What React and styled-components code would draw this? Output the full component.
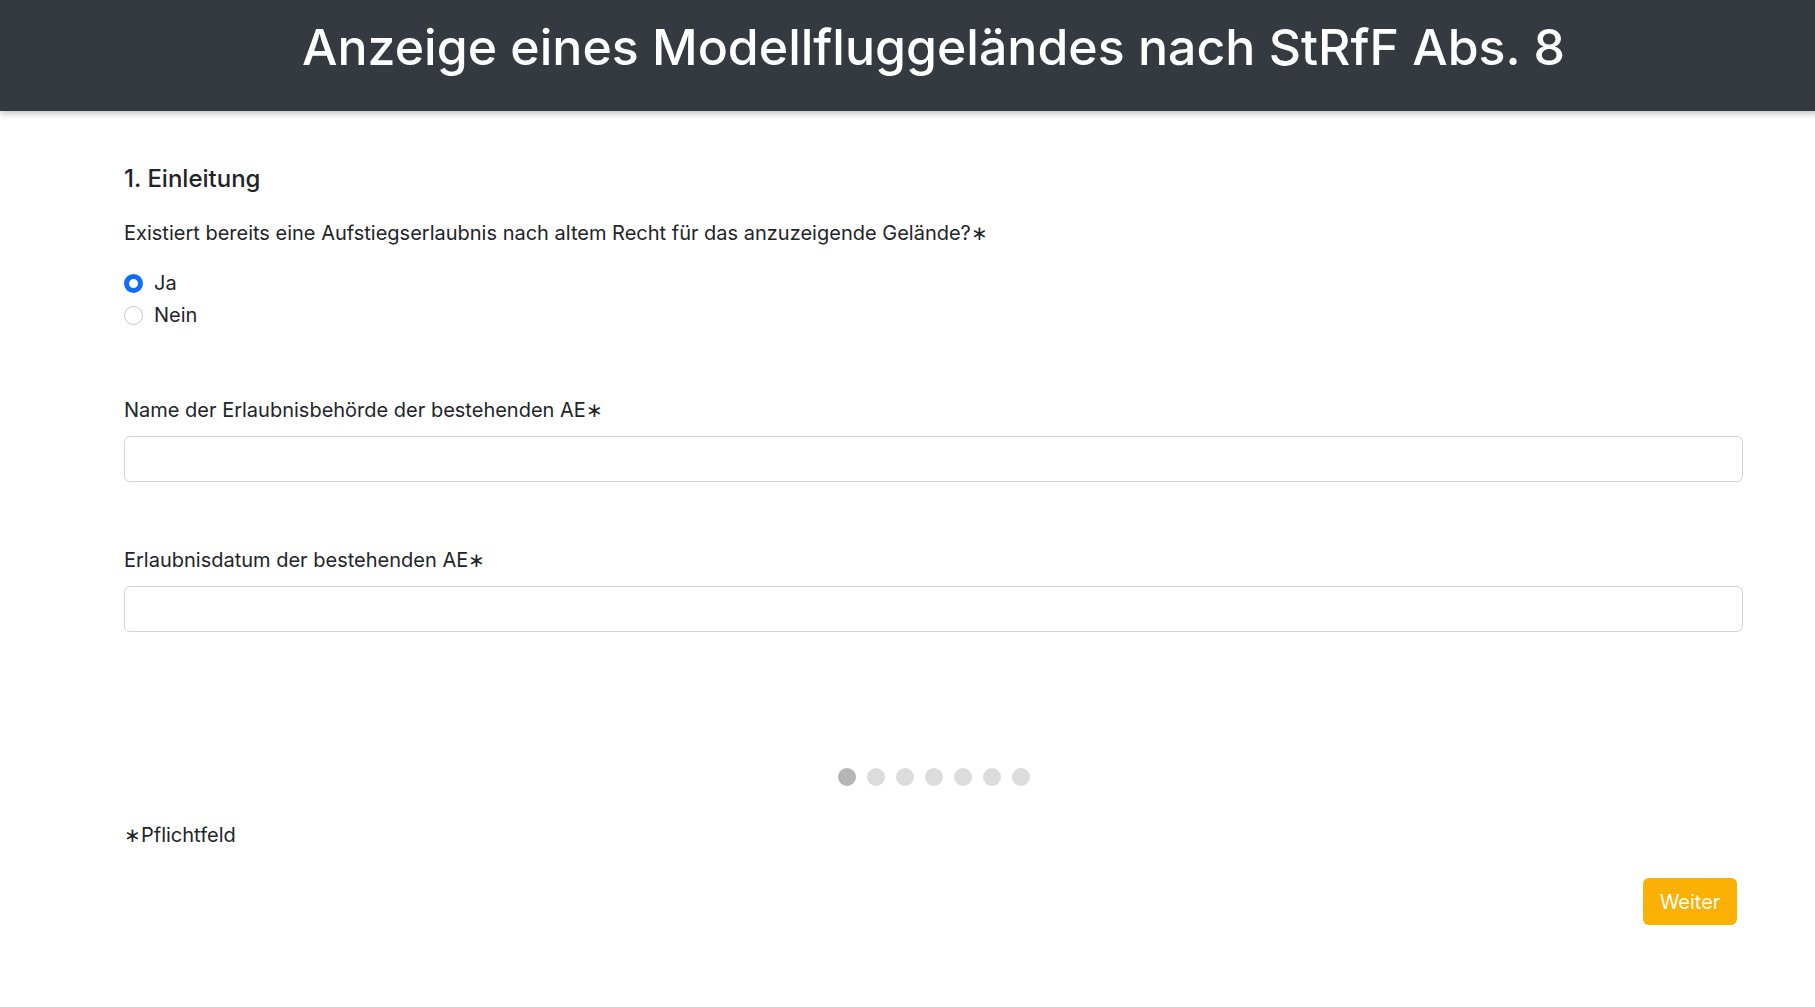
import React, { useState } from 'react';
import styled, { createGlobalStyle } from 'styled-components';

const GlobalStyle = createGlobalStyle`
  html, body {
    margin: 0;
    padding: 0;
    overflow-x: hidden;
    background: #fff;
  }
  body {
    font-family: Inter, "Noto Sans", "Liberation Sans", sans-serif;
    color: #212529;
  }
  * {
    box-sizing: border-box;
  }
`;

const STEPS = 7;

const App = () => {
  const [answer, setAnswer] = useState('ja');

  return (
    <Page>
      <GlobalStyle />
      <Header>
        <Title>Anzeige eines Modellfluggeländes nach StRfF Abs. 8</Title>
      </Header>

      <Main>
        <SectionTitle>1. Einleitung</SectionTitle>
        <Question>
          Existiert bereits eine Aufstiegserlaubnis nach altem Recht für das anzuzeigende Gelände?∗
        </Question>

        <RadioGroup>
          <RadioRow>
            <Radio
              type="radio"
              name="ae"
              checked={answer === 'ja'}
              onChange={() => setAnswer('ja')}
            />
            Ja
          </RadioRow>
          <RadioRow>
            <Radio
              type="radio"
              name="ae"
              checked={answer === 'nein'}
              onChange={() => setAnswer('nein')}
            />
            Nein
          </RadioRow>
        </RadioGroup>

        <Field $top={67}>
          <Label>Name der Erlaubnisbehörde der bestehenden AE∗</Label>
          <Input type="text" />
        </Field>

        <Field $top={66}>
          <Label>Erlaubnisdatum der bestehenden AE∗</Label>
          <Input type="text" />
        </Field>

        <Dots>
          {Array.from({ length: STEPS }).map((_, i) => (
            <Dot key={i} $active={i === 0} />
          ))}
        </Dots>

        <Hint>∗Pflichtfeld</Hint>

        <Actions>
          <NextButton>Weiter</NextButton>
        </Actions>
      </Main>
    </Page>
  );
};

const Page = styled.div`
  width: 1867px;
  min-height: 100vh;
`;

const Header = styled.header`
  background-color: #343a40;
  height: 111px;
  display: flex;
  align-items: center;
  justify-content: center;
  box-shadow: 0 3px 6px rgba(0, 0, 0, 0.22);
`;

const Title = styled.h1`
  margin: 0 0 18px;
  color: #fff;
  font-size: 50px;
  font-weight: 500;
  line-height: 60px;
`;

const Main = styled.main`
  padding: 54px 124px 0;
  display: flex;
  flex-direction: column;
`;

const SectionTitle = styled.h2`
  margin: 0;
  font-size: 24px;
  font-weight: 500;
  line-height: 28px;
`;

const Question = styled.p`
  margin: 28px 0 0;
  font-size: 20px;
  line-height: 24px;
`;

const RadioGroup = styled.div`
  margin-top: 22px;
  display: flex;
  flex-direction: column;
`;

const RadioRow = styled.label`
  display: flex;
  align-items: center;
  gap: 11px;
  height: 32px;
  font-size: 20px;
  cursor: pointer;
`;

const Radio = styled.input`
  appearance: none;
  margin: 0;
  width: 19px;
  height: 19px;
  border-radius: 50%;
  border: 1px solid #c4c8cc;
  background: #fff;

  &:checked {
    border: 5px solid #0d6efd;
    background: #fff;
  }
`;

const Field = styled.div`
  margin-top: ${({ $top }) => $top}px;
  display: flex;
  flex-direction: column;
  gap: 14px;
`;

const Label = styled.label`
  font-size: 20px;
  line-height: 24px;
`;

const Input = styled.input`
  width: 100%;
  height: 46px;
  border: 1px solid #ced4da;
  border-radius: 6px;
  padding: 0 12px;
  font: inherit;
  font-size: 20px;
  outline: none;
`;

const Dots = styled.div`
  margin-top: 136px;
  display: flex;
  justify-content: center;
  gap: 11px;
`;

const Dot = styled.span`
  width: 18px;
  height: 18px;
  border-radius: 50%;
  background: ${({ $active }) => ($active ? '#b5b5b5' : '#dcdcdc')};
`;

const Hint = styled.p`
  margin: 37px 0 0;
  font-size: 20px;
  line-height: 24px;
`;

const Actions = styled.div`
  margin-top: 31px;
  display: flex;
  justify-content: flex-end;
  padding-right: 6px;
`;

const NextButton = styled.button`
  height: 47px;
  padding: 0 16px;
  min-width: 94px;
  border: none;
  border-radius: 6px;
  background: #fbb004;
  color: #fff;
  font-family: inherit;
  font-size: 20px;
  cursor: pointer;
`;

export default App;
